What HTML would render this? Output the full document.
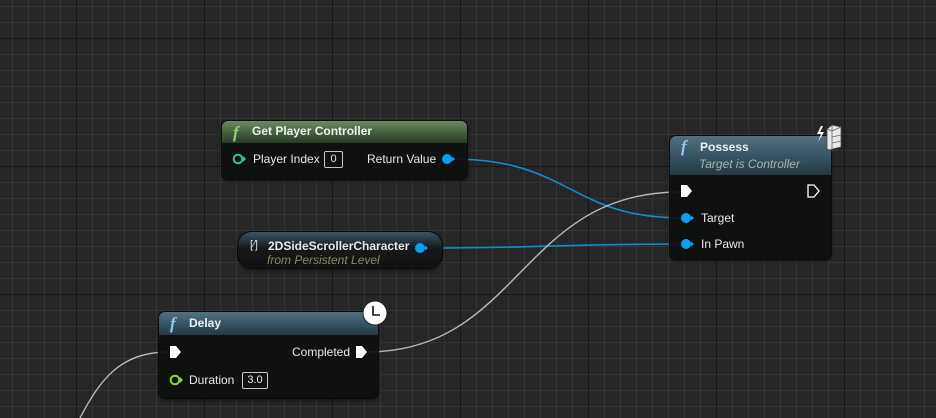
<!DOCTYPE html>
<html><head><meta charset="utf-8"><style>
body{margin:0;width:936px;height:418px;overflow:hidden;font-family:"Liberation Sans",sans-serif;}
#bg{position:absolute;left:0;top:0;width:936px;height:418px;background-color:#262626;
background-image:
linear-gradient(to right,#161616 0,#161616 1px,transparent 1px),
linear-gradient(to bottom,#161616 0,#161616 1px,transparent 1px),
linear-gradient(to right,#353535 0,#353535 1px,transparent 1px),
linear-gradient(to bottom,#353535 0,#353535 1px,transparent 1px);
background-size:128px 128px,128px 128px,16px 16px,16px 16px;
background-position:76px 0,0 38px,12px 0,0 6px;}
.node{position:absolute;background:rgba(14,16,16,0.93);border-radius:6px;box-shadow:0 0 0 1px #0a0a0a,0 2px 4px rgba(0,0,0,.6);color:#e8e8e8;font-size:12px;}
.hdr{border-radius:6px 6px 0 0;font-weight:bold;color:#f0f0f0;padding-left:30px;position:relative;}
.f{position:absolute;left:11px;font-family:"Liberation Serif",serif;font-style:italic;font-weight:bold;font-size:17px;}
.t{position:absolute;white-space:nowrap;}
.box{position:absolute;border:1px solid #c8c8c8;border-radius:2px;font-size:11px;text-align:center;height:15px;line-height:15px;}
</style></head><body>
<div id="bg"></div>
<svg width="936" height="418" style="position:absolute;left:0;top:0">
<path d="M452 159 C570 159,570 218,682 218" stroke="#0f8fd0" stroke-width="1.6" fill="none"/>
<path d="M424 248 C550 248,560 244,682 244" stroke="#0f8fd0" stroke-width="1.6" fill="none"/>
<path d="M366 352 C520 352,520 192,680 192" stroke="#b8b8b8" stroke-width="1.4" fill="none"/>
<path d="M80 418 C100 380,120 352,168 352" stroke="#b8b8b8" stroke-width="1.4" fill="none"/>
</svg>

<!-- Get Player Controller -->
<div class="node" style="left:222px;top:121px;width:245px;height:58px;">
 <div class="hdr" style="height:22px;line-height:21px;background:linear-gradient(#6d8a62,#3f5a3a 60%,#2a3a28);"><span class="f" style="color:#8fd47a;top:1px;">f</span>Get Player Controller</div>
 <svg style="position:absolute;left:10px;top:32px" width="14" height="12"><circle cx="6" cy="6" r="4.3" stroke="#2ec4a0" stroke-width="2" fill="none"/><path d="M11 3 L14 6 L11 9Z" fill="#2ec4a0"/></svg>
 <div class="t" style="left:31px;top:31px">Player Index</div>
 <div class="box" style="left:102px;top:30px;width:17px;">0</div>
 <div class="t" style="left:145px;top:31px">Return Value</div>
 <svg style="position:absolute;left:219px;top:31px" width="16" height="14"><circle cx="6" cy="7" r="5" fill="#0aa0f0"/><path d="M11 4.5 L14 7 L11 9.5Z" fill="#0aa0f0"/></svg>
</div>

<!-- 2DSide -->
<div class="node" style="left:238px;top:232px;width:204px;height:36px;border-radius:14px;background:linear-gradient(#3b5566,#16191b 45%,#111);">
 <div class="t" style="left:12px;top:7px;font-size:11px;color:#ddd">[⁄]</div>
 <div class="t" style="left:30px;top:7px;font-weight:bold;">2DSideScrollerCharacter</div>
 <div class="t" style="left:29px;top:21px;font-style:italic;color:#8c8a62;">from Persistent Level</div>
 <svg style="position:absolute;left:175px;top:9px" width="16" height="14"><circle cx="7" cy="7" r="5" fill="#0aa0f0"/><path d="M12 4.5 L15 7 L12 9.5Z" fill="#0aa0f0"/></svg>
</div>

<!-- Possess -->
<div class="node" style="left:670px;top:136px;width:161px;height:123px;">
 <div class="hdr" style="height:39px;background:linear-gradient(#52707f,#34505e 60%,#253842);"><span class="f" style="color:#8ec8ef;top:1px;">f</span><div class="t" style="left:30px;top:4px">Possess</div><div class="t" style="left:29px;top:21px;font-weight:normal;font-style:italic;color:#a8b4ac;">Target is Controller</div></div>
 <svg style="position:absolute;left:10px;top:48px" width="14" height="14"><path d="M1 1 H7 L12 7 L7 13 H1Z" fill="#fff"/></svg>
 <svg style="position:absolute;left:137px;top:48px" width="14" height="14"><path d="M1 1 H7 L12 7 L7 13 H1Z" fill="none" stroke="#fff" stroke-width="1.3"/></svg>
 <svg style="position:absolute;left:10px;top:75px" width="16" height="14"><circle cx="6" cy="7" r="5" fill="#0aa0f0"/><path d="M11 4.5 L14 7 L11 9.5Z" fill="#0aa0f0"/></svg>
 <div class="t" style="left:31px;top:75px">Target</div>
 <svg style="position:absolute;left:10px;top:101px" width="16" height="14"><circle cx="6" cy="7" r="5" fill="#0aa0f0"/><path d="M11 4.5 L14 7 L11 9.5Z" fill="#0aa0f0"/></svg>
 <div class="t" style="left:31px;top:101px">In Pawn</div>
</div>
<svg style="position:absolute;left:815px;top:123px" width="30" height="30"><path d="M6 3 L2 11 L6 11 L3 19 L9 9 L5 9 L8 3Z" fill="#fff"/><path d="M12 6 L17 2 L26 4 L26 24 L14 27 L12 26Z" fill="#e8e8e8" stroke="#444" stroke-width="0.8"/><path d="M17 2 L17 8 L26 4 M12 6 L17 8 L17 28 M17 14 L26 12 M17 20 L26 18" stroke="#666" stroke-width="0.8" fill="none"/></svg>

<!-- Delay -->
<div class="node" style="left:159px;top:312px;width:219px;height:86px;">
 <div class="hdr" style="height:23px;line-height:22px;background:linear-gradient(#52707f,#34505e 60%,#253842);"><span class="f" style="color:#8ec8ef;top:1px;">f</span>Delay</div>
 <svg style="position:absolute;left:10px;top:33px" width="14" height="14"><path d="M1 1 H7 L12 7 L7 13 H1Z" fill="#fff"/></svg>
 <div class="t" style="left:133px;top:33px">Completed</div>
 <svg style="position:absolute;left:196px;top:33px" width="14" height="14"><path d="M1 1 H7 L12 7 L7 13 H1Z" fill="#fff"/></svg>
 <svg style="position:absolute;left:10px;top:62px" width="14" height="12"><circle cx="6" cy="6" r="4.3" stroke="#8ed62a" stroke-width="2" fill="none"/><path d="M11 3 L14 6 L11 9Z" fill="#8ed62a"/></svg>
 <div class="t" style="left:30px;top:61px">Duration</div>
 <div class="box" style="left:83px;top:60px;width:24px;">3.0</div>
</div>
<svg style="position:absolute;left:362px;top:300px" width="26" height="26"><circle cx="13" cy="13" r="12" fill="#fff" stroke="#222" stroke-width="1"/><path d="M11 6 V15 H18" stroke="#111" stroke-width="1.6" fill="none"/></svg>
</body></html>
